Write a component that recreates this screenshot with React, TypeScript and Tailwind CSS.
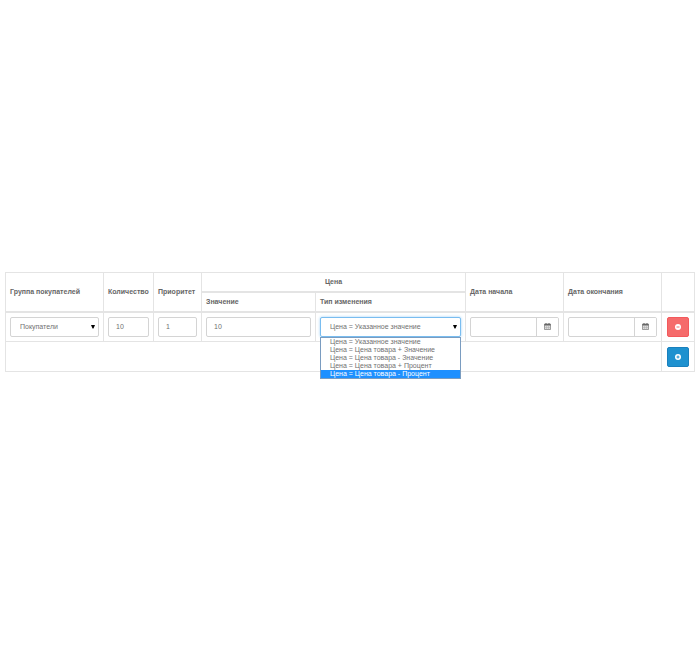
import { useState } from "react";

const priceTypes = [
  "Цена = Указанное значение",
  "Цена = Цена товара + Значение",
  "Цена = Цена товара - Значение",
  "Цена = Цена товара + Процент",
  "Цена = Цена товара - Процент",
];

const control =
  "block h-5 w-full min-w-0 rounded-[2px] border border-[#d4d4d4] bg-white text-[7px] text-[#707070] outline-none";
const cell = "border border-[#e4e4e4] px-1";
const head = "border border-[#e4e4e4] px-1 text-left font-bold";

function Caret() {
  return (
    <svg viewBox="0 0 8 8" className="pointer-events-none absolute right-1 top-2 h-1 w-1" aria-hidden="true">
      <path d="M0 0h8L5 7H3z" fill="#000" />
    </svg>
  );
}

function CalendarIcon() {
  return (
    <svg viewBox="0 0 14 14" className="h-[7px] w-[7px]" aria-hidden="true">
      <path d="M1 2h12v11H1z" fill="#ddd" stroke="#777" strokeWidth="1.4" />
      <path d="M1 2h12v3H1zM3 0h2v3H3zM9 0h2v3H9z" fill="#666" />
      <path d="M5 5v8M9 5v8M1 9h12" stroke="#aaa" strokeWidth="1" />
    </svg>
  );
}

function DateField({ label }: { label: string }) {
  return (
    <div className="flex h-5 w-full overflow-hidden rounded-[2px] border border-[#d4d4d4]">
      <input type="text" aria-label={label} className="min-w-0 flex-1 px-2 text-[7px] text-[#707070] outline-none" />
      <button
        type="button"
        aria-label={`${label}: календарь`}
        className="flex w-[22px] items-center justify-center border-l border-[#d4d4d4] bg-white"
      >
        <CalendarIcon />
      </button>
    </div>
  );
}

export default function App() {
  const [type, setType] = useState(0);

  return (
    <main className="min-h-screen bg-white px-[5px] pt-[272px] font-['Liberation_Sans',Arial,sans-serif] text-[7px] leading-[10px] text-[#666]">
      <table className="w-full table-fixed border-collapse">
        <colgroup>
          <col className="w-[98px]" />
          <col className="w-[50px]" />
          <col className="w-[48px]" />
          <col className="w-[114px]" />
          <col className="w-[150px]" />
          <col className="w-[98px]" />
          <col className="w-[98px]" />
          <col className="w-[33px]" />
        </colgroup>
        <thead>
          <tr className="h-[19px]">
            <th rowSpan={2} className={head}>Группа покупателей</th>
            <th rowSpan={2} className={head}>Количество</th>
            <th rowSpan={2} className={head}>Приоритет</th>
            <th colSpan={2} className="border border-b-2 border-[#e4e4e4] px-1 text-center font-bold">Цена</th>
            <th rowSpan={2} className={head}>Дата начала</th>
            <th rowSpan={2} className={head}>Дата окончания</th>
            <td rowSpan={2} className={cell} />
          </tr>
          <tr className="h-5">
            <th className={head}>Значение</th>
            <th className={head}>Тип изменения</th>
          </tr>
        </thead>
        <tbody className="border-t-2 border-[#e4e4e4]">
          <tr className="h-[30px]">
            <td className={cell}>
              <div className="relative">
                <select aria-label="Группа покупателей" className={`${control} appearance-none pl-[9px]`}>
                  <option>Покупатели</option>
                </select>
                <Caret />
              </div>
            </td>
            <td className={cell}>
              <input type="text" aria-label="Количество" defaultValue="10" className={`${control} px-[7px]`} />
            </td>
            <td className={cell}>
              <input type="text" aria-label="Приоритет" defaultValue="1" className={`${control} px-[7px]`} />
            </td>
            <td className={cell}>
              <input type="text" aria-label="Значение" defaultValue="10" className={`${control} px-[7px]`} />
            </td>
            <td className={cell}>
              <div className="relative">
                <select
                  aria-label="Тип изменения"
                  value={type}
                  onChange={(e) => setType(Number(e.target.value))}
                  className="block h-5 w-full appearance-none rounded-[2px] border border-[#79bdf0] bg-white pl-[9px] text-[7px] text-[#707070] shadow-[0_0_3px_#9fd0f5] outline-none"
                >
                  {priceTypes.map((name, i) => (
                    <option key={name} value={i}>{name}</option>
                  ))}
                </select>
                <Caret />
                <ul className="absolute inset-x-0 top-full z-10 border border-[#7a9cc0] bg-white leading-[8px] text-[#707070]">
                  {priceTypes.map((name, i) => (
                    <li
                      key={name}
                      onClick={() => setType(i)}
                      className={
                        i === 4
                          ? "whitespace-nowrap bg-[#1e90ff] pl-[9px] text-white"
                          : "whitespace-nowrap pl-[9px]"
                      }
                    >
                      {name}
                    </li>
                  ))}
                </ul>
              </div>
            </td>
            <td className={cell}>
              <DateField label="Дата начала" />
            </td>
            <td className={cell}>
              <DateField label="Дата окончания" />
            </td>
            <td className={cell}>
              <button
                type="button"
                aria-label="Удалить"
                className="mx-auto flex h-5 w-[22px] items-center justify-center rounded-[2px] border border-[#f3595c] bg-[#f56b6b]"
              >
                <svg viewBox="0 0 12 12" className="h-[6px] w-[6px]" aria-hidden="true">
                  <circle cx="6" cy="6" r="6" fill="#fff" />
                  <path d="M3 6h6" stroke="#f56b6b" strokeWidth="2" />
                </svg>
              </button>
            </td>
          </tr>
          <tr className="h-[30px]">
            <td colSpan={7} className={cell} />
            <td className={cell}>
              <button
                type="button"
                aria-label="Добавить"
                className="mx-auto flex h-5 w-[22px] items-center justify-center rounded-[2px] border border-[#1a80bd] bg-[#1e91cf]"
              >
                <svg viewBox="0 0 12 12" className="h-[6px] w-[6px]" aria-hidden="true">
                  <circle cx="6" cy="6" r="6" fill="#fff" />
                  <path d="M3 6h6M6 3v6" stroke="#1e91cf" strokeWidth="2" />
                </svg>
              </button>
            </td>
          </tr>
        </tbody>
      </table>
    </main>
  );
}
